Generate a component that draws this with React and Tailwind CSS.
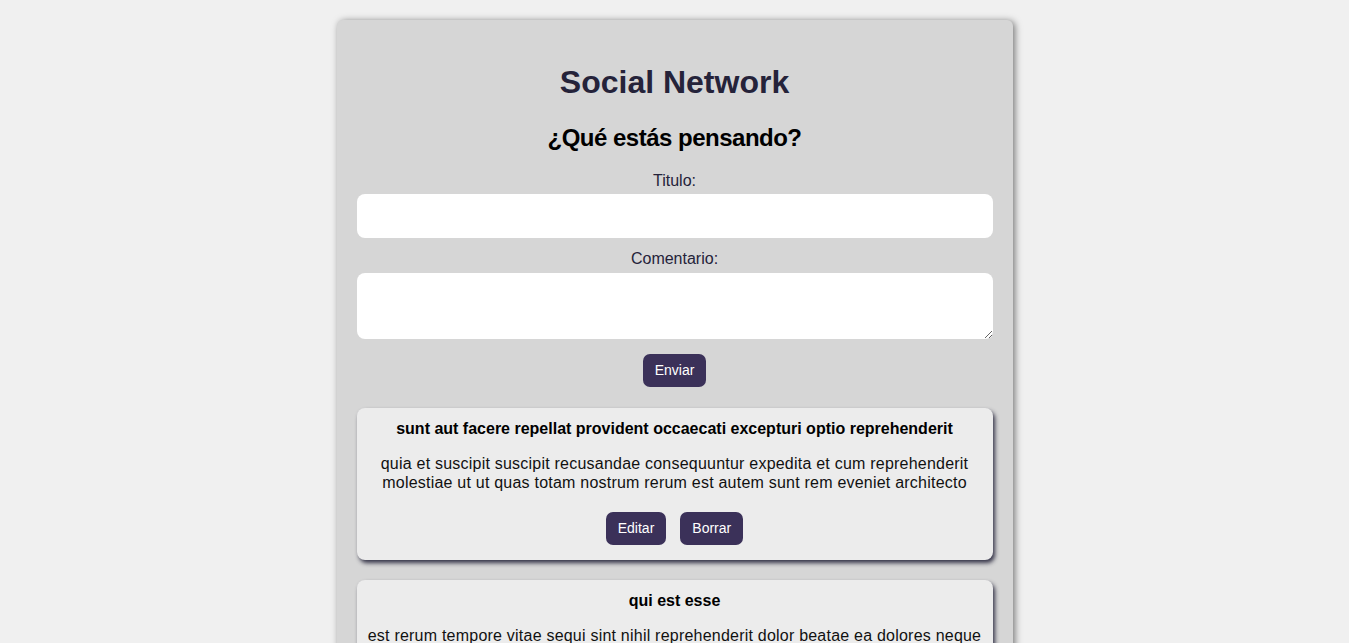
import { useState } from "react";

const posts = [
  {
    id: 1,
    title: "sunt aut facere repellat provident occaecati excepturi optio reprehenderit",
    body: "quia et suscipit suscipit recusandae consequuntur expedita et cum reprehenderit molestiae ut ut quas totam nostrum rerum est autem sunt rem eveniet architecto",
  },
  {
    id: 2,
    title: "qui est esse",
    body: "est rerum tempore vitae sequi sint nihil reprehenderit dolor beatae ea dolores neque fugiat blanditiis voluptate porro vel nihil molestiae ut reiciendis qui aperiam non debitis possimus qui neque nisi nulla",
  },
];

const btn =
  "h-[33px] px-3 rounded-[7px] bg-[#3b3159] text-white text-[14px] font-['Liberation_Sans',Arial,sans-serif]";

export default function App() {
  const [title, setTitle] = useState("");
  const [comment, setComment] = useState("");

  return (
    <div className="min-h-screen bg-[#f0f0f0] pt-5 font-['Liberation_Sans',Arial,sans-serif]">
      <div className="mx-auto w-[676px] rounded-[6px] bg-[#d6d6d6] px-5 pt-5 pb-5 shadow-[2px_1px_7px_rgba(0,0,0,0.5)] flex flex-col items-center">
        <h1 className="mt-[23px] text-[32px] leading-[38px] font-bold text-[#25233a]">
          Social Network
        </h1>
        <h2 className="mt-[22px] text-[24px] leading-[29px] font-bold tracking-[-0.5px] text-black">
          ¿Qué estás pensando?
        </h2>

        <label className="mt-[19px] text-[16px] leading-[20px] text-[#25233a]">
          Titulo:
        </label>
        <input
          value={title}
          onChange={(e) => setTitle(e.target.value)}
          className="mt-[3px] h-[44px] w-full rounded-[8px] bg-white px-3 outline-none"
        />

        <label className="mt-[11px] text-[16px] leading-[20px] text-[#25233a]">
          Comentario:
        </label>
        <textarea
          value={comment}
          onChange={(e) => setComment(e.target.value)}
          className="mt-[4px] h-[66px] w-full rounded-[8px] bg-white px-3 py-2 outline-none resize"
        />

        <button type="button" className={`${btn} mt-[15px]`}>
          Enviar
        </button>

        <div className="mt-[21px] w-full flex flex-col gap-5">
          {posts.map((p) => (
            <div
              key={p.id}
              className="w-full rounded-[8px] bg-[#ececec] px-[10px] pt-[11px] pb-[15px] text-center shadow-[2px_3px_4px_rgba(37,35,58,0.9)]"
            >
              <h3 className="text-[16px] leading-[19px] font-bold text-black">{p.title}</h3>
              <p className="mt-4 text-[16px] leading-[19px] tracking-[0.22px] text-[#111]">
                {p.body}
              </p>
              <div className="mt-5 flex justify-center gap-[14px]">
                <button type="button" className={btn}>
                  Editar
                </button>
                <button type="button" className={btn}>
                  Borrar
                </button>
              </div>
            </div>
          ))}
        </div>
      </div>
    </div>
  );
}
